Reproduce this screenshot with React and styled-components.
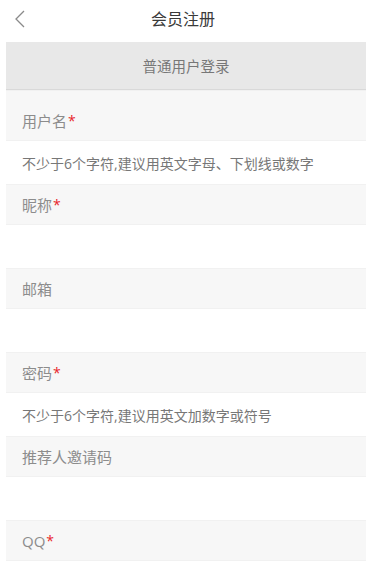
import React from 'react';
import styled, { createGlobalStyle } from 'styled-components';

const GlobalStyle = createGlobalStyle`
    html, body {
        margin: 0;
        padding: 0;
        background: #fff;
        font-family: "Open Sans", "Noto Sans CJK SC", sans-serif;
    }
`;

const Page = styled.div`
    width: 366px;
    min-height: 577px;
    background: #fff;
`;

const Header = styled.div`
    position: relative;
    height: 42px;
    display: flex;
    align-items: center;
    justify-content: center;
    color: #3a3a3a;
    font-size: 16px;
    font-weight: 400;
    margin-top: -3px;

    & > .back {
        position: absolute;
        left: 13px;
        top: 13px;
    }
`;

const Tab = styled.div`
    margin-left: 6px;
    height: 47px;
    margin-top: 3px;
    background: #e8e8e8;
    border-bottom: 1px solid #d9d9d9;
    display: flex;
    align-items: center;
    justify-content: center;
    color: #777;
    font-size: 14.5px;
`;

const Form = styled.div`
    margin-left: 6px;
`;

const Field = styled.div`
    height: ${p => (p.first ? 51 : 41)}px;
    box-sizing: border-box;
    padding-top: ${p => (p.first ? 10 : 0)}px;
    padding-left: 16px;
    display: flex;
    align-items: center;
    background: #f7f7f7;
    border-top: 1px solid #f1f1f1;
    border-bottom: 1px solid #f1f1f1;
    color: #8c8c8c;
    font-size: 15px;

    & > .req {
        color: #e8262a;
        font-size: 14px;
        margin-left: 1px;
    }
`;

const Hint = styled.div`
    height: 43px;
    display: flex;
    align-items: center;
    padding-left: 16px;
    color: #777;
    font-size: 14px;
`;

const fields = [
    { label: '用户名', req: true, hint: '不少于6个字符,建议用英文字母、下划线或数字' },
    { label: '昵称', req: true, hint: '' },
    { label: '邮箱', req: false, hint: '' },
    { label: '密码', req: true, hint: '不少于6个字符,建议用英文加数字或符号' },
    { label: '推荐人邀请码', req: false, hint: '' },
    { label: 'QQ', req: true, hint: '' },
];

const App = () => {
    return (
        <Page>
            <GlobalStyle />
            <Header>
                <svg className="back" width="14" height="18" viewBox="0 0 14 18">
                    <path d="M11 1 L3 9 L11 17" fill="none" stroke="#8a8a8a" strokeWidth="1.3" />
                </svg>
                会员注册
            </Header>
            <Tab>普通用户登录</Tab>
            <Form>
                {fields.map((f, i) => (
                    <React.Fragment key={f.label}>
                        <Field first={i === 0}>
                            {f.label}
                            {f.req && <span className="req">*</span>}
                        </Field>
                        {i < fields.length - 1 && <Hint>{f.hint}</Hint>}
                    </React.Fragment>
                ))}
            </Form>
        </Page>
    );
};

export default App;
